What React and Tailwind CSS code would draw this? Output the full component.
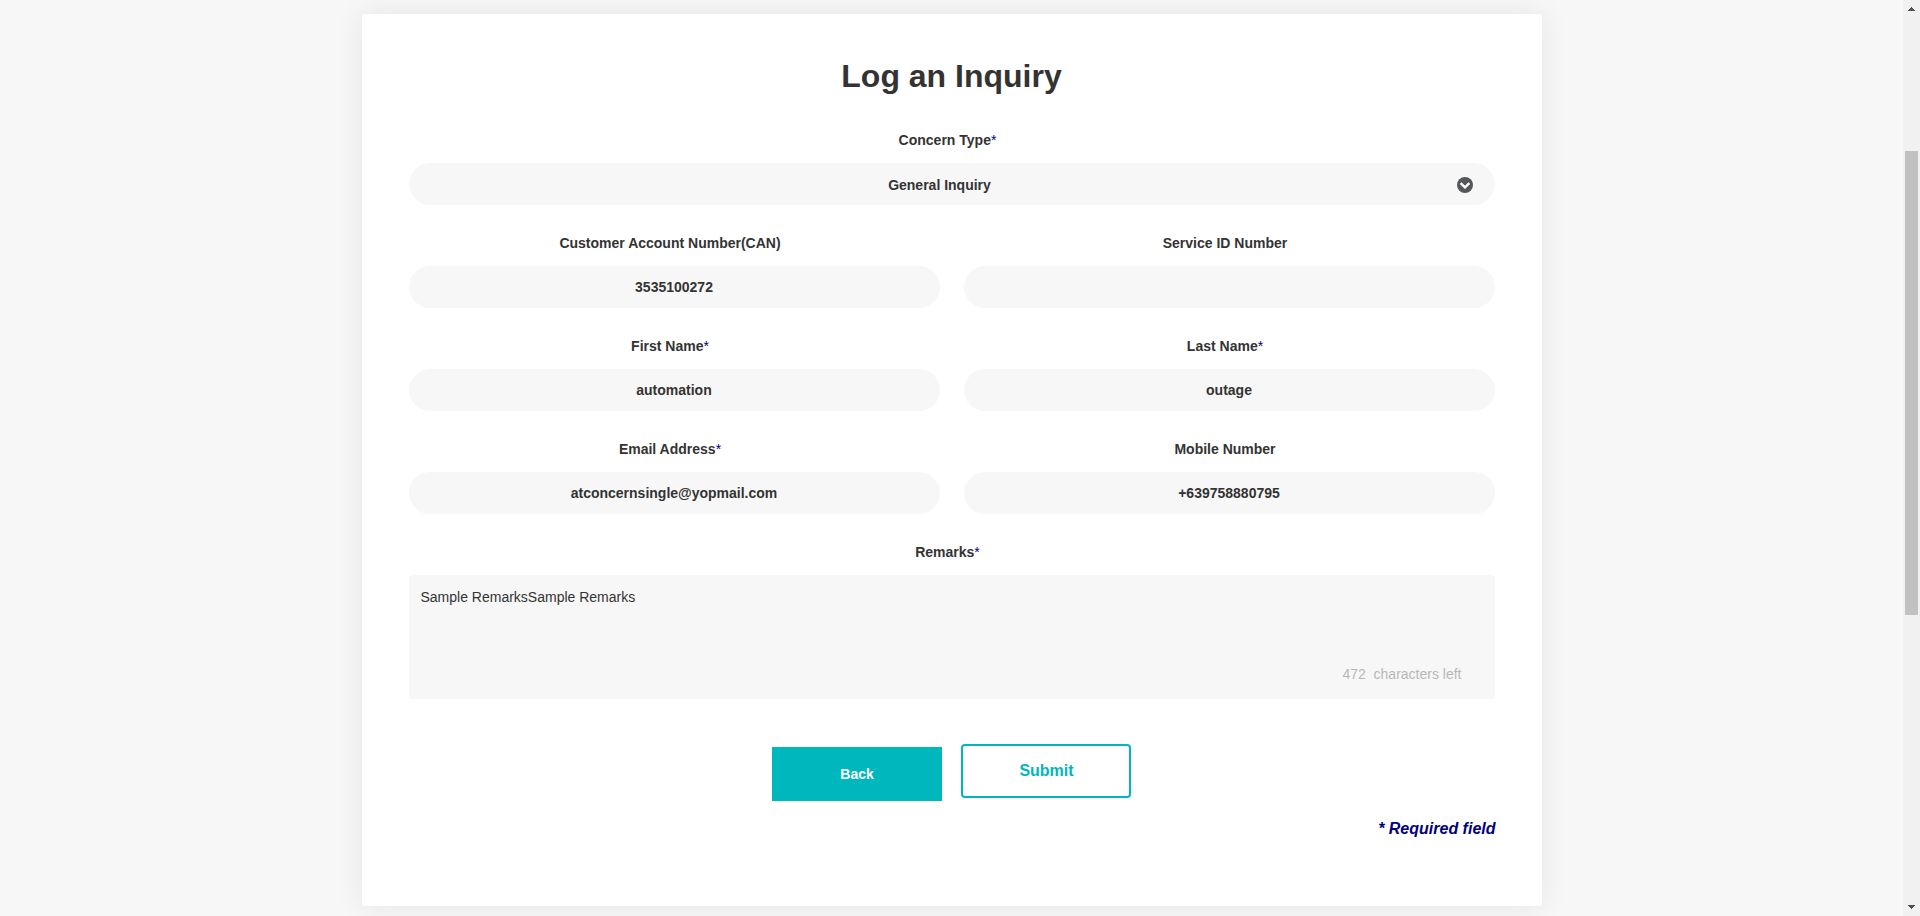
function Label({ children, required }) {
  return (
    <div className="h-[33px] pr-[8px] text-center text-[14px] leading-[20px] font-bold">
      {children}
      {required && <span className="font-normal text-[#000080]">*</span>}
    </div>
  );
}

function Field({ label, value, required }) {
  return (
    <div className="h-[103px] flex-1">
      <Label required={required}>{label}</Label>
      <div className="flex h-[42px] items-center justify-center rounded-full bg-[#f7f7f7] text-[14px] leading-[20px] font-bold">
        {value}
      </div>
    </div>
  );
}

function Scrollbar() {
  return (
    <div className="flex h-full w-[17px] shrink-0 flex-col bg-[#f1f1f1]">
      <svg className="h-[17px] w-[17px]" viewBox="0 0 17 17" shapeRendering="crispEdges">
        <path d="M8 7h1v1h1v1h1v1h1v1H5v-1h1V9h1V8h1z" fill="#505050" />
      </svg>
      <div className="mx-[2px] mt-[134px] h-[464px] bg-[#c1c1c1]" />
      <svg className="mt-auto h-[17px] w-[17px]" viewBox="0 0 17 17" shapeRendering="crispEdges">
        <path d="M5 6h7v1h-1v1h-1v1H9v1H8V9H7V8H6V7H5z" fill="#505050" />
      </svg>
    </div>
  );
}

export default function App() {
  return (
    <div className="flex h-[916px] w-full overflow-hidden bg-[#f7f7f7] font-['Liberation_Sans',Arial,sans-serif] text-[#333333]">
      <main className="flex flex-1 justify-center pt-[14px]">
        <section className="h-[892px] w-[1180px] rounded bg-white px-[47px] pt-[43px] shadow-[0_0_30px_rgba(0,0,0,0.08)]">
          <h1 className="h-[73px] text-center text-[32px] leading-[38px] font-bold">Log an Inquiry</h1>

          <div className="h-[103px]">
            <Label required>Concern Type</Label>
            <div className="flex h-[42px] items-center rounded-full bg-[#f7f7f7] pr-[22px] pl-[14px]">
              <span className="flex-1 pt-[2px] text-center text-[14px] leading-[20px] font-bold">General Inquiry</span>
              <svg className="mt-[2px] h-4 w-4" viewBox="0 0 16 16">
                <circle cx="8" cy="8" r="8" fill="#555759" />
                <path d="M3.6 6.2L8 10.3l4.4-4.1" fill="none" stroke="#fff" strokeWidth="2.5" />
              </svg>
            </div>
          </div>

          <div className="flex gap-6">
            <Field label="Customer Account Number(CAN)" value="3535100272" />
            <Field label="Service ID Number" value="" />
          </div>
          <div className="flex gap-6">
            <Field label="First Name" value="automation" required />
            <Field label="Last Name" value="outage" required />
          </div>
          <div className="flex gap-6">
            <Field label="Email Address" value="atconcernsingle@yopmail.com" required />
            <Field label="Mobile Number" value="+639758880795" />
          </div>

          <Label required>Remarks</Label>
          <div className="flex h-[124px] flex-col justify-between rounded bg-[#f7f7f7] pt-[12px] pr-[33px] pb-[15px] pl-[12px] text-[14px] leading-[20px]">
            <p>Sample RemarksSample Remarks</p>
            <p className="text-right whitespace-pre text-[#b7b7b7]">472  characters left</p>
          </div>

          <div className="mt-[45px] flex h-[73px] justify-center gap-[19px]">
            <button className="mt-[3px] h-[54px] w-[170px] bg-[#00b7bd] text-[14px] font-bold text-white">Back</button>
            <button className="h-[54px] w-[170px] rounded border-2 border-[#00b7bd] bg-white pl-[1px] text-[16px] font-bold text-[#00b7bd]">
              Submit
            </button>
          </div>
          <p className="-mr-px text-right text-[16px] leading-[24px] font-bold text-[#000080] italic">* Required field</p>
        </section>
      </main>
      <Scrollbar />
    </div>
  );
}
